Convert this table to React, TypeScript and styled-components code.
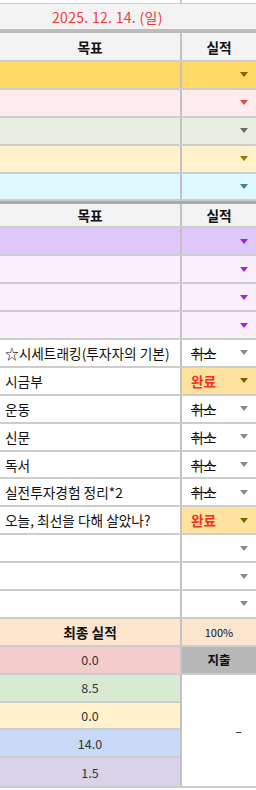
import React from "react";
import styled, { createGlobalStyle } from "styled-components";

const Global = createGlobalStyle`
  html, body { margin: 0; padding: 0; background: #ffffff; }
  body { font-family: "Noto Sans CJK KR", "Noto Sans", sans-serif; }
`;

const ROW = 27.9;
const LINE = "#cdcdcd";
const DIV = "#c2c2c2";

const Sheet = styled.div`
  width: 256px;
  display: flex;
  flex-direction: column;
  background: #ffffff;
`;

const Stub = styled.div`
  height: 3px;
  display: grid;
  grid-template-columns: 182px 74px;
  border-bottom: 1px solid ${LINE};
  & > div:first-child { border-right: 2px solid ${DIV}; }
`;

const DateRow = styled.div`
  height: 25px;
  background: #f3f3f3;
  border-bottom: 4px solid #bcbcbc;
  display: flex;
  align-items: center;
  padding-left: 52px;
  color: #f23c3c;
  font-size: 14px;
  letter-spacing: 0.3px;
`;

const Row = styled.div<{ $bg?: string; $top?: string }>`
  height: ${ROW}px;
  box-sizing: border-box;
  display: grid;
  grid-template-columns: 182px 74px;
  background: ${(p) => p.$bg || "#ffffff"};
  border-bottom: 2px solid ${LINE};
  ${(p) => (p.$top ? `border-top: ${p.$top};` : "")}
`;

const Left = styled.div<{ $center?: boolean; $bold?: boolean; $size?: number; $color?: string }>`
  border-right: 2px solid ${DIV};
  display: flex;
  align-items: center;
  justify-content: ${(p) => (p.$center ? "center" : "flex-start")};
  padding-left: ${(p) => (p.$center ? "0" : "5px")};
  font-size: ${(p) => p.$size || 13.7}px;
  font-weight: ${(p) => (p.$bold ? 700 : 400)};
  color: ${(p) => p.$color || "#111111"};
  white-space: nowrap;
  overflow: hidden;
`;

const Right = styled.div<{ $bg?: string; $center?: boolean; $bold?: boolean; $size?: number }>`
  display: flex;
  align-items: center;
  justify-content: ${(p) => (p.$center ? "center" : "space-between")};
  padding: ${(p) => (p.$center ? "0" : "0 8px 0 9px")};
  background: ${(p) => p.$bg || "transparent"};
  font-size: ${(p) => p.$size || 13.7}px;
  font-weight: ${(p) => (p.$bold ? 700 : 400)};
  color: #111111;
  white-space: nowrap;
`;

const Status = styled.span<{ $done?: boolean }>`
  color: ${(p) => (p.$done ? "#f5301e" : "#111111")};
  font-weight: ${(p) => (p.$done ? 700 : 400)};
  text-decoration: ${(p) => (p.$done ? "none" : "line-through")};
  text-decoration-thickness: 1px;
`;

const Caret = styled.span<{ $c: string }>`
  width: 0;
  height: 0;
  margin-left: auto;
  border-left: 4.5px solid transparent;
  border-right: 4.5px solid transparent;
  border-top: 5px solid ${(p) => p.$c};
`;

const Bottom = styled.div`
  display: grid;
  grid-template-columns: 182px 74px;
  border-bottom: 2px solid ${LINE};
`;

const ValueCol = styled.div`
  display: flex;
  flex-direction: column;
  border-right: 2px solid ${DIV};
`;

const ValueCell = styled.div<{ $bg: string; $last?: boolean }>`
  height: ${ROW}px;
  box-sizing: border-box;
  background: ${(p) => p.$bg};
  border-bottom: ${(p) => (p.$last ? "none" : `2px solid ${LINE}`)};
  display: flex;
  align-items: center;
  justify-content: center;
  font-size: 12.5px;
  color: #333333;
`;

const Merged = styled.div`
  display: flex;
  align-items: center;
  justify-content: flex-end;
  padding-right: 14px;
  font-size: 13px;
  color: #222;
`;

type Goal = { label?: string; status?: "done" | "cancel"; caret: string; bg?: string; rbg?: string };

const top: Goal[] = [
  { bg: "#ffd966", caret: "#7f6000" },
  { bg: "#fdeced", caret: "#e84646" },
  { bg: "#e8efe1", caret: "#6b6b6b" },
  { bg: "#fff2cc", caret: "#9c7400" },
  { bg: "#ddf8ff", caret: "#3f8296" },
];

const goals: Goal[] = [
  { bg: "#e0c7fb", caret: "#a020f0" },
  { bg: "#faf0fd", caret: "#a020f0" },
  { bg: "#faf0fd", caret: "#a020f0" },
  { bg: "#faf0fd", caret: "#a020f0" },
  { label: "☆시세트래킹(투자자의 기본)", status: "cancel", caret: "#8a8a8a" },
  { label: "시금부", status: "done", caret: "#7f6000", rbg: "#fee39f" },
  { label: "운동", status: "cancel", caret: "#8a8a8a" },
  { label: "신문", status: "cancel", caret: "#8a8a8a" },
  { label: "독서", status: "cancel", caret: "#8a8a8a" },
  { label: "실전투자경험 정리*2", status: "cancel", caret: "#8a8a8a" },
  { label: "오늘, 최선을 다해 살았나?", status: "done", caret: "#7f6000", rbg: "#fee39f" },
  { caret: "#8a8a8a" },
  { caret: "#8a8a8a" },
  { caret: "#8a8a8a" },
];

const GoalRow = ({ g }: { g: Goal }) => (
  <Row $bg={g.bg}>
    <Left>{g.label}</Left>
    <Right $bg={g.rbg}>
      {g.status && <Status $done={g.status === "done"}>{g.status === "done" ? "완료" : "취소"}</Status>}
      <Caret $c={g.caret} />
    </Right>
  </Row>
);

const HeaderRow = styled(Row)<{ $first?: boolean }>`
  height: ${(p) => (p.$first ? 29 : 27)}px;
`;

const Header = ({ first }: { first?: boolean }) => (
  <HeaderRow $bg="#f3f3f3" $first={first} $top={first ? undefined : "3px solid #a9a9a9"}>
    <Left $center $bold>목표</Left>
    <Right $center $bold>실적</Right>
  </HeaderRow>
);

export default function App() {
  return (
    <>
      <Global />
      <Sheet>
        <Stub>
          <div />
          <div />
        </Stub>
        <DateRow>2025. 12. 14. (일)</DateRow>
        <Header first />
        {top.map((g, i) => (
          <GoalRow key={"t" + i} g={g} />
        ))}
        <Header />
        {goals.map((g, i) => (
          <GoalRow key={"g" + i} g={g} />
        ))}
        <Row $bg="#fde5d0">
          <Left $center $bold>최종 실적</Left>
          <Right $center $size={11}>100%</Right>
        </Row>
        <Row $bg="#f4cccc">
          <Left $center $size={12.5} $color="#333">0.0</Left>
          <Right $center $bold $bg="#b7b7b7" $size={12.5}>지출</Right>
        </Row>
        <Bottom>
          <ValueCol>
            <ValueCell $bg="#d9ead3">8.5</ValueCell>
            <ValueCell $bg="#fff2cc">0.0</ValueCell>
            <ValueCell $bg="#c9daf8">14.0</ValueCell>
            <ValueCell $bg="#d9d2e9" $last>1.5</ValueCell>
          </ValueCol>
          <Merged>–</Merged>
        </Bottom>
      </Sheet>
    </>
  );
}
